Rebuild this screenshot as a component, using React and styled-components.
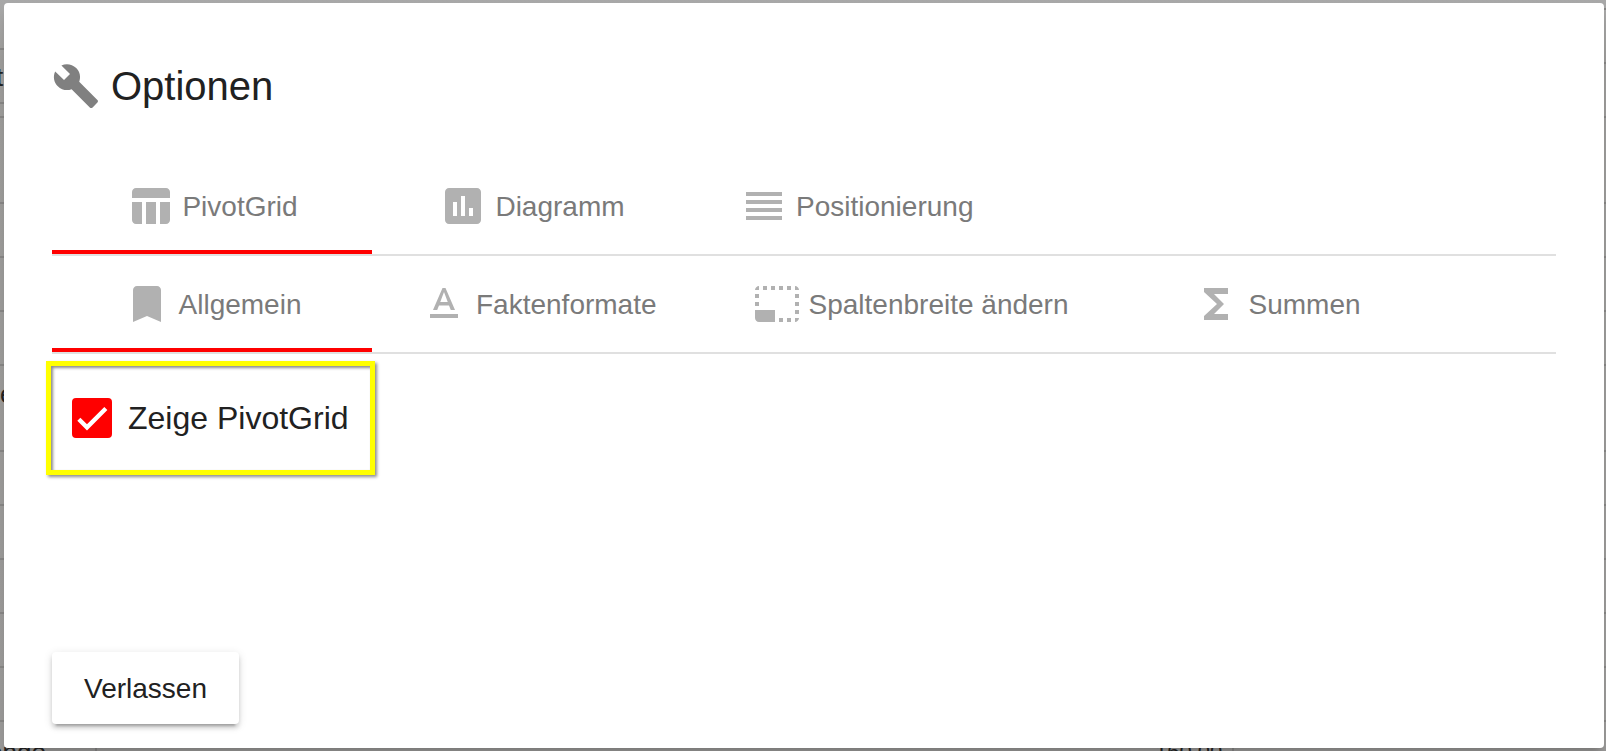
import React, { useState } from "react";
import styled, { createGlobalStyle } from "styled-components";

const GlobalStyle = createGlobalStyle`
  * { box-sizing: border-box; }
  body {
    margin: 0;
    font-family: "Liberation Sans", Arial, sans-serif;
    color: #212121;
  }
`;

const Page = styled.div`
  position: relative;
  min-height: 100vh;
  padding: 3px 2px 3px 4px;
  display: flex;
  overflow: hidden;
  background: linear-gradient(#a8a8a8, #9b9a98 60px, #989796);
`;

const Backdrop = styled.div`
  position: absolute;
  inset: 0;
  overflow: hidden;
  font-size: 26px;
  line-height: 32px;
`;

const GridLine = styled.div`
  position: absolute;
  top: ${(p) => p.$top}px;
  left: ${(p) => (p.$side === "right" ? "50%" : 0)};
  right: ${(p) => (p.$side === "left" ? "50%" : 0)};
  height: 2px;
  background: #858483;
`;

const ColumnLine = styled.div`
  position: absolute;
  left: ${(p) => p.$left}px;
  top: 721px;
  bottom: 0;
  width: 2px;
  background: #858483;
`;

const CellText = styled.span`
  position: absolute;
  left: ${(p) => p.$left}px;
  top: ${(p) => p.$top}px;
  font-size: ${(p) => (p.$small ? 22 : 26)}px;
  white-space: nowrap;
`;

const Dialog = styled.main`
  position: relative;
  flex: 1;
  min-width: 0;
  display: flex;
  flex-direction: column;
  padding: 48px 48px 24px;
  background: #fff;
  border-radius: 4px;
  box-shadow: 0 8px 8px -4px rgba(0, 0, 0, 0.22);
`;

const Title = styled.h1`
  margin: 0 0 37px;
  height: 70px;
  display: flex;
  align-items: center;
  gap: 11px;
  font-size: 40px;
  line-height: 48px;
  font-weight: 400;
`;

const Icon = styled.svg`
  width: 48px;
  height: 48px;
  flex: none;
  fill: ${(p) => p.$color || "#b1b1b1"};
`;

const TabBar = styled.div`
  display: flex;
  border-bottom: 2px solid #e0e0e0;
`;

const Tab = styled.button`
  height: 96px;
  min-width: 320px;
  padding: 0 48px;
  border: 0;
  background: none;
  box-shadow: ${(p) => (p.$active ? "inset 0 -4px #f00" : "none")};
  display: flex;
  align-items: center;
  justify-content: center;
  gap: 8px;
  font: inherit;
  font-size: 28px;
  line-height: 32px;
  color: #7a7a7a;
  white-space: nowrap;
  cursor: pointer;
`;

const TabLabel = styled.span`
  padding-top: 2px;
`;

const Panel = styled.section`
  flex: 1;
  display: flex;
  align-items: flex-start;
  margin: 7px 0 24px -6px;
`;

const CheckOption = styled.label`
  display: flex;
  align-items: center;
  gap: 16px;
  height: 114px;
  padding: 0 21px;
  border: 5px solid #ff0;
  box-shadow: 2px 2px 3px rgba(0, 0, 0, 0.45),
    inset 2px 2px 3px rgba(0, 0, 0, 0.45);
  font-size: 32px;
  line-height: 40px;
  white-space: nowrap;
  cursor: pointer;
`;

const CheckControl = styled.span`
  display: grid;
  width: 40px;
  height: 40px;

  > * { grid-area: 1 / 1; }
`;

const CheckInput = styled.input`
  appearance: none;
  width: 40px;
  height: 40px;
  margin: 0;
  border: 4px solid #757575;
  border-radius: 4px;
  cursor: pointer;

  &:checked { background: #f00; border-color: #f00; }
  &:checked + svg { visibility: visible; }
`;

const CheckMark = styled.svg`
  width: 40px;
  height: 40px;
  position: relative;
  visibility: hidden;
  pointer-events: none;
  fill: none;
  stroke: #fff;
  stroke-width: 2.6;
`;

const LeaveButton = styled.button`
  align-self: flex-start;
  height: 72px;
  padding: 2px 32px 0;
  border: 0;
  border-radius: 4px;
  background: #fff;
  color: #212121;
  font: inherit;
  font-size: 28px;
  line-height: 32px;
  cursor: pointer;
  box-shadow: 0 6px 2px -4px rgba(0, 0, 0, 0.2),
    0 4px 4px rgba(0, 0, 0, 0.14), 0 2px 10px rgba(0, 0, 0, 0.12);
`;

const paths = {
  wrench:
    "M22.7 19l-9.1-9.1c.9-2.3.4-5-1.5-6.9-2-2-5-2.4-7.4-1.3L9 6 6 9 1.6 4.7C.4 7.1.9 10.1 2.9 12.1c1.9 1.9 4.6 2.4 6.9 1.5l9.1 9.1c.4.4 1 .4 1.4 0l2.3-2.3c.5-.4.5-1.1.1-1.4z",
  table:
    "M10 10.02h5V21h-5V10.02zM17 21h3c1.1 0 2-.9 2-2v-9h-5v11zm3-18H5c-1.1 0-2 .9-2 2v3h19V5c0-1.1-.9-2-2-2zM3 19c0 1.1.9 2 2 2h3V10H3v9z",
  chart:
    "M19 3H5c-1.1 0-2 .9-2 2v14c0 1.1.9 2 2 2h14c1.1 0 2-.9 2-2V5c0-1.1-.9-2-2-2zM9 17H7v-7h2v7zm4 0h-2V7h2v10zm4 0h-2v-4h2v4z",
  lines: "M3 15h18v-2H3v2zm0 4h18v-2H3v2zm0-8h18V9H3v2zm0-6v2h18V5H3z",
  bookmark: "M17 3H7c-1.1 0-1.99.9-1.99 2L5 21l7-3 7 3V5c0-1.1-.9-2-2-2z",
  textFormat:
    "M5 17v2h14v-2H5zm4.5-4.2h5l.9 2.2h2.1L12.75 4h-1.5L6.5 15h2.1l.9-2.2zM12 5.98L13.87 11h-3.74L12 5.98z",
  columnSize:
    "M21 15h2v2h-2v-2zm0-4h2v2h-2v-2zm2 8h-2v2c1 0 2-1 2-2zM13 3h2v2h-2V3zm8 4h2v2h-2V7zm0-4v2h2c0-1-1-2-2-2zM1 7h2v2H1V7zm16-4h2v2h-2V3zm0 16h2v2h-2v-2zM3 3C2 3 1 4 1 5h2V3zm6 0h2v2H9V3zM5 3h2v2H5V3zm-4 8v2h2v-2H1zm0 4v4c0 1.1.9 2 2 2h8v-6H1zm12 4h2v2h-2v-2z",
  sum: "M18 4H6v2l6.5 6L6 18v2h12v-3h-7l5-5-5-5h7z",
};

const mainTabs = [
  { label: "PivotGrid", icon: "table" },
  { label: "Diagramm", icon: "chart" },
  { label: "Positionierung", icon: "lines" },
];

const gridTabs = [
  { label: "Allgemein", icon: "bookmark" },
  { label: "Faktenformate", icon: "textFormat" },
  { label: "Spaltenbreite ändern", icon: "columnSize" },
  { label: "Summen", icon: "sum" },
];

const leftLines = [48, 102, 116];
const rightLines = [8, 62, 116];
const rowLines = [202, 256, 310, 364, 450, 504, 558, 612, 666, 720];

function MaterialIcon({ name, color }) {
  return (
    <Icon viewBox="0 0 24 24" $color={color} aria-hidden="true">
      <path d={paths[name]} />
    </Icon>
  );
}

function Tabs({ items, label }) {
  const [active, setActive] = useState(0);
  return (
    <TabBar role="tablist" aria-label={label}>
      {items.map((item, i) => (
        <Tab
          key={item.label}
          type="button"
          role="tab"
          aria-selected={i === active}
          $active={i === active}
          onClick={() => setActive(i)}
        >
          <MaterialIcon name={item.icon} />
          <TabLabel>{item.label}</TabLabel>
        </Tab>
      ))}
    </TabBar>
  );
}

export default function App() {
  const [shown, setShown] = useState(true);
  return (
    <Page>
      <GlobalStyle />
      <Backdrop aria-hidden="true">
        {leftLines.map((y) => <GridLine key={y} $top={y} $side="left" />)}
        {rightLines.map((y) => <GridLine key={y} $top={y} $side="right" />)}
        {rowLines.map((y) => <GridLine key={y} $top={y} />)}
        <ColumnLine $left={95} />
        <ColumnLine $left={1232} />
        <CellText $left={-4} $top={61}>t</CellText>
        <CellText $left={0} $top={378}>e</CellText>
        <CellText $left={-12} $top={736}>onge</CellText>
        <CellText $left={1155} $top={736} $small>160,00</CellText>
      </Backdrop>
      <Dialog role="dialog" aria-labelledby="dialog-title">
        <Title id="dialog-title">
          <MaterialIcon name="wrench" color="#808080" />
          Optionen
        </Title>
        <Tabs items={mainTabs} label="Optionen" />
        <Tabs items={gridTabs} label="PivotGrid" />
        <Panel role="tabpanel">
          <CheckOption htmlFor="show-grid">
            <CheckControl>
              <CheckInput
                id="show-grid"
                type="checkbox"
                checked={shown}
                onChange={(e) => setShown(e.target.checked)}
              />
              <CheckMark viewBox="0 0 24 24" aria-hidden="true">
                <path d="M4.1 12.7L9 17.6 20.3 6.3" />
              </CheckMark>
            </CheckControl>
            Zeige PivotGrid
          </CheckOption>
        </Panel>
        <LeaveButton type="button">Verlassen</LeaveButton>
      </Dialog>
    </Page>
  );
}
